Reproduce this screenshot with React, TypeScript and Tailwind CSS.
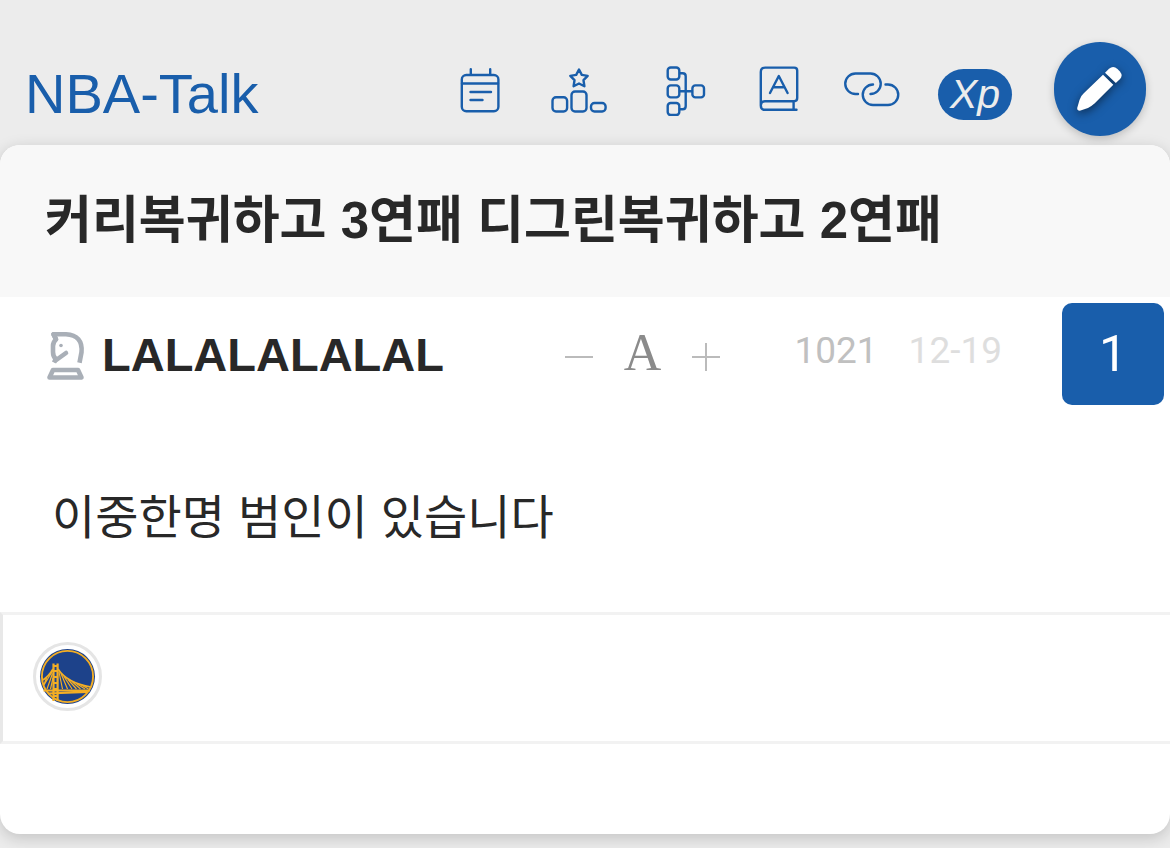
import type { ReactNode } from "react";

export default function App() {
  return (
    <div className="min-h-screen bg-[#ececec] pb-[14px] font-['Liberation_Sans','Noto_Sans_CJK_KR',sans-serif] text-[#282828]">
      <Header />
      <main className="overflow-hidden rounded-[20px] bg-white shadow-[0_4px_16px_rgba(0,0,0,0.18)]">
        <h1 className="bg-[#f8f8f8] px-[45px] pt-[38px] pb-[38px] text-[51px] leading-[76px] font-bold">
          커리복귀하고 3연패 디그린복귀하고 2연패
        </h1>
        <PostInfo />
        <p className="px-[52px] pt-[78px] pb-[59px] text-[47px] leading-[70px]">
          이중한명 범인이 있습니다
        </p>
        <section className="flex h-[132px] items-start border-y-3 border-l-3 border-y-[#f2f2f2] border-l-[#e8e8e8] pt-[27px] pl-[30px]">
          <TeamLogo />
        </section>
        <div className="h-[90px]" />
      </main>
    </div>
  );
}

const Header = () => {
  return (
    <header className="flex h-[145px] items-start pt-[42px] pr-6 pl-[25px]">
      <a href="#" className="pt-5 text-[56px] leading-[64px] text-[#195eab]">
        NBA-Talk
      </a>
      <nav className="ml-auto flex h-[98px] items-center text-[#195eab]">
        <NavButton label="Calendar" className="w-[78px]">
          <CalendarIcon />
        </NavButton>
        <NavButton label="Ranking" className="w-[120px]">
          <RankingIcon />
        </NavButton>
        <NavButton label="Bracket" className="w-[93px]">
          <BracketIcon />
        </NavButton>
        <NavButton label="Dictionary" className="w-[93px]">
          <DictionaryIcon />
        </NavButton>
        <NavButton label="Links" className="w-[93px]">
          <LinkIcon />
        </NavButton>
        <button className="mt-[6px] ml-5 h-[51px] w-[74px] rounded-full bg-[#195eab] text-[41px] leading-[48px] text-[#ececec] italic">
          Xp
        </button>
      </nav>
      <button
        aria-label="Write"
        className="ml-[42px] flex h-[94px] w-[92px] items-center justify-center rounded-full bg-[#195eab] shadow-[0_3px_8px_rgba(0,0,0,0.2)]"
      >
        <PencilIcon />
      </button>
    </header>
  );
};

const NavButton = ({
  label,
  className,
  children,
}: {
  label: string;
  className: string;
  children: ReactNode;
}) => {
  return (
    <button aria-label={label} className={`flex justify-center ${className}`}>
      {children}
    </button>
  );
};

const PostInfo = () => {
  return (
    <div className="flex items-start pt-[6px] pr-[6px] pl-[46px]">
      <KnightIcon />
      <a href="#" className="ml-4 pt-[25px] text-[47px] leading-[54px] font-bold">
        LALALALALAL
      </a>
      <div className="ml-auto flex h-[102px] items-center pt-[6px] text-[#bbbbbb]">
        <button aria-label="Smaller text">
          <svg className="h-7 w-7" viewBox="0 0 28 28" stroke="currentColor" strokeWidth="2">
            <path d="M0 14h28" />
          </svg>
        </button>
        <button
          aria-label="Default text size"
          className="mx-[31px] pb-2 font-['Liberation_Serif',serif] text-[52px] leading-[52px] text-[#8b8b8b]"
        >
          A
        </button>
        <button aria-label="Larger text">
          <svg className="h-7 w-7" viewBox="0 0 28 28" stroke="currentColor" strokeWidth="2">
            <path d="M0 14h28M14 0v28" />
          </svg>
        </button>
      </div>
      <div className="mr-[60px] ml-[74px] flex gap-[31px] pt-[22px] font-[Roboto,sans-serif] text-[37px] leading-[52px]">
        <span className="text-[#c0c0c0]">1021</span>
        <span className="text-[#dedede]">12-19</span>
      </div>
      <button className="h-[102px] w-[102px] rounded-[10px] bg-[#195eab] font-[Roboto,sans-serif] text-[50px] text-white">
        1
      </button>
    </div>
  );
};

const CalendarIcon = () => (
  <svg className="h-[48px] w-10" viewBox="0 0 40 48" fill="none" stroke="currentColor" strokeWidth="2.4" strokeLinecap="round">
    <rect x="1.8" y="8" width="36.6" height="36.2" rx="4.5" />
    <path d="M2 16.500h36M10.800 2.200v5.600M30.200 2.200v5.600M10.500 25H31M10.500 33h12" />
  </svg>
);

const RankingIcon = () => (
  <svg className="h-[48px] w-14" viewBox="0 0 56 48" fill="none" stroke="currentColor" strokeWidth="2.4" strokeLinejoin="round">
    <path d="m28 2.500 2.800 5.400 5.900 1-4.200 4.300.9 6-5.400-2.700-5.400 2.700.9-6-4.200-4.300 5.900-1z" />
    <rect x="1.5" y="30.2" width="14.6" height="14.3" rx="3.5" />
    <rect x="20.5" y="24.5" width="15" height="20" rx="3.5" />
    <rect x="40" y="36" width="14.6" height="8.5" rx="3.5" />
  </svg>
);

const BracketIcon = () => (
  <svg className="h-[50px] w-10" viewBox="0 0 40 50" fill="none" stroke="currentColor" strokeWidth="2.4">
    <rect x="1.7" y="1.5" width="11.6" height="12" rx="3" />
    <rect x="1.7" y="19.4" width="11.6" height="12" rx="3" />
    <rect x="1.7" y="37" width="11.6" height="12" rx="3" />
    <rect x="26.4" y="19.4" width="11.6" height="12" rx="3" />
    <path d="M13.300 7.200h3.400q3 0 3 3v30q0 3-3 3h-3.400M13.300 25.300h13.100" />
  </svg>
);

const DictionaryIcon = () => (
  <svg className="mb-1 h-[46px] w-10" viewBox="0 0 40 46" fill="none" stroke="currentColor" strokeWidth="2.4" strokeLinecap="round" strokeLinejoin="round">
    <path d="M1.800 39.500V6q0-4.400 4.400-4.400h29q3 0 3 3V32q0 3.200-3 3.200H6q-4.200 0-4.200 4.300t4.200 4.300h31.500M34.600 35.500v8" />
    <path d="m11 27 8.800-17 8.800 17M14 21.200h11.400" />
  </svg>
);

const LinkIcon = () => (
  <svg className="mb-1 h-[35px] w-14" viewBox="0 0 56 35" fill="none" stroke="currentColor" strokeWidth="2.4" strokeLinecap="round">
    <path d="M14 22h-2.500A10 10 0 0 1 11.500 1.500H26.500A10 10 0 0 1 26.500 22" />
    <path d="M41.500 12.500H44a10.100 10.100 0 0 1 0 20.500H29a10.100 10.100 0 0 1 0-20.500" />
  </svg>
);

const PencilIcon = () => (
  <svg className="h-[46px] w-[46px] drop-shadow-[0_3px_5px_rgba(0,0,0,0.5)]" viewBox="0 0 46 46" fill="#fff">
    <path d="M26 8.800 36.300 18.800 17.500 37.500Q14.500 40.200 11 42L3.500 44.600Q0 45 .2 42L2.500 34Q4 29.500 7 27z" />
    <path d="m28 6.800 4-4q4.200-3.600 8.500.2l2.400 2.400q3.300 4 .2 7.600l-4.300 4z" />
  </svg>
);

const KnightIcon = () => (
  <svg className="mt-[28px] h-[50px] w-10 shrink-0" viewBox="0 0 40 50" fill="none" stroke="#a9afb7" strokeWidth="4.6" strokeLinecap="round" strokeLinejoin="round">
    <path d="M8 31.500 9.800 28Q7 25.500 7 21v-6q0-4 3-6.500L7.500 3.200H20q17 1 15.500 18l-2 10.500" strokeLinecap="butt" />
    <path d="M7.500 3.500 10 8M9.500 29.500l10.500-7.500" />
    <path d="M7 39h25l3.500 7.500H3.500z" />
    <circle cx="15" cy="14.5" r="1.8" fill="#a9afb7" stroke="none" />
  </svg>
);

const TeamLogo = () => (
  <svg className="h-[69px] w-[69px]" viewBox="0 0 69 69" fill="none" role="img" aria-label="Golden State Warriors">
    <circle cx="34.5" cy="34.5" r="33" fill="#fff" stroke="#e5e5e5" strokeWidth="3" />
    <circle cx="34.5" cy="34.5" r="27.5" fill="#1d428a" />
    <circle cx="34.5" cy="34.5" r="25.6" stroke="#f4ae24" strokeWidth="1.9" />
    <g stroke="#f4ae24">
      <path d="M20.500 21.500V59M24.600 21.500V59" strokeWidth="2.2" />
      <path d="M20 24h5M20 29h5M20 35h5M20 41h5M20 47h5M20 54h5" strokeWidth="2" />
      <path d="M10.500 48.500h46.500M15 51.500l39-1.500" strokeWidth="1.9" />
      <path d="M10 38q6-4 10-11M25 27q9 14 33 18" strokeWidth="1.7" />
      <path d="M19.500 29 11 43M19.500 31.500 14 47M20 36l-2.500 11M13.500 36l-3 8M26 30l3.500 17M28 31.500l6.500 15.500M31 34.500l8 12.500M35 37.500l8.500 9.500M39.500 40l8 7M44 42l8 5M48.500 43l7 4" strokeWidth="1.2" />
    </g>
  </svg>
);
